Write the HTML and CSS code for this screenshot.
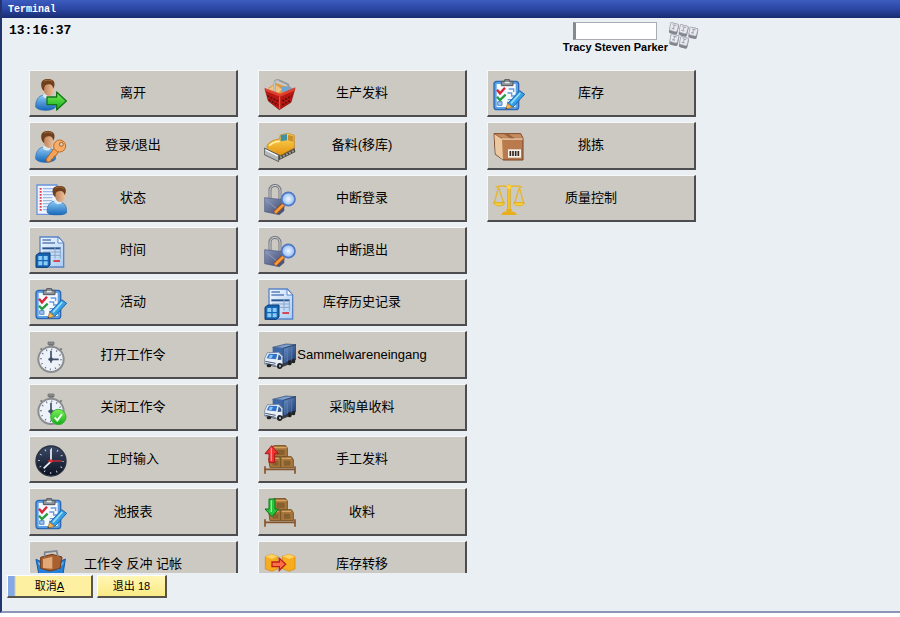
FILE: index.html
```
<!DOCTYPE html>
<html lang="zh-CN">
<head>
    <meta charset="UTF-8">
    <meta name="viewport" content="width=device-width, initial-scale=1.0">
    <title>Terminal</title>
    <link rel="stylesheet" href="styles.css">
</head>
<body>
    <!-- Shared icons -->
    <svg class="sprite" aria-hidden="true">
        <defs>
            <linearGradient id="blue" x1="0" y1="0" x2="0" y2="1"><stop offset="0" stop-color="#8cc8f5"/><stop offset="1" stop-color="#1465b8"/></linearGradient>
            <linearGradient id="skin" x1="0" y1="0" x2="1" y2="0"><stop offset="0" stop-color="#b87a50"/><stop offset="1" stop-color="#eec29c"/></linearGradient>
            <linearGradient id="green" x1="0" y1="0" x2="0" y2="1"><stop offset="0" stop-color="#7df05a"/><stop offset="1" stop-color="#12ac18"/></linearGradient>
            <linearGradient id="paper" x1="0" y1="0" x2="1" y2="1"><stop offset="0" stop-color="#f2f8ff"/><stop offset="1" stop-color="#a9cdf4"/></linearGradient>
            <linearGradient id="night" x1="0" y1="0" x2="0" y2="1"><stop offset="0" stop-color="#3c4a66"/><stop offset="1" stop-color="#0b1222"/></linearGradient>
            <linearGradient id="gold" x1="0" y1="0" x2="0" y2="1"><stop offset="0" stop-color="#ffd95c"/><stop offset="1" stop-color="#e39410"/></linearGradient>
            <linearGradient id="steel" x1="0" y1="0" x2="1" y2="1"><stop offset="0" stop-color="#8d99bd"/><stop offset="1" stop-color="#3c466c"/></linearGradient>
            <linearGradient id="tarp" x1="0" y1="0" x2="1" y2="1"><stop offset="0" stop-color="#6b93c8"/><stop offset="1" stop-color="#1b3468"/></linearGradient>
            <radialGradient id="lens"><stop offset="0" stop-color="#f0f7ff"/><stop offset="1" stop-color="#8fbaf2"/></radialGradient>
        </defs>

        <symbol id="person" viewBox="0 0 96 96">
            <path d="M2 84c-1-20 9-34 22-35l18 3c14 2 19 14 20 32-8 13-52 14-60 0z" fill="url(#blue)" stroke="#2b6cae" stroke-width="2"/>
            <path d="M23 50c5 9 16 12 24 3l-3-7H26z" fill="#dce9f3"/>
            <path d="M23 16c0-10 33-12 34 4 1 18-5 31-15 31-11 0-18-14-19-35z" fill="url(#skin)"/>
            <path d="M19 22C16 4 27 0 39 0c14 0 22 6 19 22l-4 8c0-9-4-14-12-14-7 0-12 2-14 8l-1 12c-5-3-7-8-8-14z" fill="#70401e"/>
            <path d="M27 7c7-5 18-5 25 1" fill="none" stroke="#a06c3c" stroke-width="3"/>
        </symbol>

        <symbol id="leave" viewBox="0 0 96 96">
            <use href="#person"/>
            <path d="M36 54h29V39l29 27-29 27V77H36z" fill="url(#green)" stroke="#14741a" stroke-width="4" stroke-linejoin="round"/>
        </symbol>

        <symbol id="login" viewBox="0 0 96 96">
            <use href="#person"/>
            <path d="M60 48L34 84l2 9 10-1 4-8 5-1 2-7 6-2 8-13z" fill="#f3a35a" stroke="#b8621c" stroke-width="3" stroke-linejoin="round"/>
            <circle cx="74" cy="45" r="18" fill="#f5ad67" stroke="#c26d26" stroke-width="3"/>
            <circle cx="79" cy="40" r="6" fill="#ccc9c2" stroke="#b8621c" stroke-width="3"/>
        </symbol>

        <symbol id="status" viewBox="0 0 96 96">
            <path d="M6 3h60v88H6z" fill="#eef4ff" stroke="#6b93dc" stroke-width="4"/>
            <path d="M24 14h34M24 23h34M24 32h34M24 41h28M24 50h28M24 59h22M24 68h20M24 77h20" stroke="#9ab8e8" stroke-width="4"/>
            <path d="M17 12v70" stroke="#d9444e" stroke-width="6" stroke-dasharray="5 4"/>
            <svg x="34" y="6" width="62" height="88" viewBox="0 0 62 94" preserveAspectRatio="none"><use href="#person" width="96" height="96"/></svg>
        </symbol>

        <symbol id="time" viewBox="0 0 96 96">
            <path d="M15 3h55l16 18v72H15z" fill="url(#paper)" stroke="#5a84c8" stroke-width="4"/>
            <path d="M69 3v18h17z" fill="#fff" stroke="#5a84c8" stroke-width="3"/>
            <path d="M22 12h26M22 21h38" stroke="#5a7fb8" stroke-width="4"/>
            <path d="M22 37h56" stroke="#2c568e" stroke-width="6"/>
            <path d="M24 48h52M24 58h52M60 34v34M76 34v34" stroke="#8ba4c8" stroke-width="3"/>
            <path d="M55 75h20" stroke="#d82c34" stroke-width="5"/>
            <path d="M3 58l9-7h33v36l-8 7H3z" fill="#1764b4" stroke="#0b3a72" stroke-width="3"/>
            <path d="M10 60h12v12H10zM26 60h12v12H26zM10 76h12v12H10zM26 76h12v12H26z" fill="#8accf8"/>
        </symbol>

        <symbol id="activity" viewBox="0 0 96 96">
            <rect x="3" y="7" width="74" height="85" rx="9" fill="#5b9fe4" stroke="#2b67b5" stroke-width="4"/>
            <path d="M11 15h57v69H11z" fill="#f4f9ff"/>
            <path d="M25 20V7h10V2h15v5h10v13z" fill="#8d9297" stroke="#50565c" stroke-width="3"/>
            <path d="M35 11h15" stroke="#e1e5e8" stroke-width="4"/>
            <path d="M47 30h15v9M43 42h13v9h10M44 62h14v8H42" fill="none" stroke="#6a9ad8" stroke-width="4"/>
            <path d="M14 68h13v11H14z" fill="#9bc4ee" stroke="#5a8ac8" stroke-width="3"/>
            <path d="M12 32l9 11 15-17" fill="none" stroke="#d92536" stroke-width="7"/>
            <path d="M12 53l9 10 17-16" fill="none" stroke="#259c3e" stroke-width="7"/>
            <path d="M80 35l15 11-36 39-15-11z" fill="#35a0e4" stroke="#1868ac" stroke-width="3"/>
            <path d="M82 42L54 73" stroke="#9bddfc" stroke-width="5"/>
            <path d="M44 73l15 12-21 6z" fill="#f0b75c" stroke="#94642c" stroke-width="2"/>
            <path d="M39 86l-1 5 6-1z" fill="#333"/>
        </symbol>

        <symbol id="stopwatch" viewBox="0 0 96 96">
            <path d="M39 3h18v8H39zM44 10h9v10h-9z" fill="#8e8f91" stroke="#66686b" stroke-width="2"/>
            <path d="M17 22l9 9M80 22l-9 9" stroke="#77797c" stroke-width="6"/>
            <circle cx="48" cy="55" r="38" fill="#edf1f8" stroke="#8b8d90" stroke-width="6"/>
            <circle cx="48" cy="55" r="30" fill="none" stroke="#626d80" stroke-width="5" stroke-dasharray="3 12.7"/>
            <path d="M48 29v36M40 55h31" stroke="#3f4f68" stroke-width="5"/>
            <circle cx="48" cy="55" r="6" fill="#3f4f68"/>
        </symbol>

        <symbol id="stopwatch-ok" viewBox="0 0 96 96">
            <use href="#stopwatch"/>
            <circle cx="70" cy="72" r="23" fill="url(#green)" stroke="#3fae3d" stroke-width="3"/>
            <path d="M59 73l8 9 14-19" fill="none" stroke="#effff0" stroke-width="6"/>
        </symbol>

        <symbol id="clock" viewBox="0 0 96 96">
            <circle cx="48" cy="48" r="45" fill="url(#night)" stroke="#28303e" stroke-width="4"/>
            <circle cx="48" cy="48" r="36" fill="none" stroke="#c6cedc" stroke-width="6" stroke-dasharray="3 15.85" stroke-dashoffset="1"/>
            <path d="M48 13v36L26 70" fill="none" stroke="#f2f5fa" stroke-width="5"/>
            <path d="M38 48h43" stroke="#d3272d" stroke-width="4"/>
            <circle cx="48" cy="48" r="5" fill="#e03434"/>
        </symbol>

        <symbol id="posting" viewBox="0 0 96 96">
            <path d="M3 28l16 7h54l18-8-9 59c-20 9-48 9-68 0z" fill="#2680d8" stroke="#1558a4" stroke-width="3"/>
            <path d="M10 38l14 17 8-14 14 20 10-18 12 14 17-20" fill="none" stroke="#79c2f8" stroke-width="4"/>
            <path d="M17 22l34-9 30 8-6 34-30 8-28-8z" fill="#a9602f" stroke="#713817" stroke-width="3"/>
            <path d="M24 27l28-7v36l-28-2z" fill="#e2a878"/>
            <path d="M29 20V7l36-4 4 18" fill="none" stroke="#7d8590" stroke-width="5"/>
        </symbol>

        <symbol id="basket" viewBox="0 0 96 96">
            <path d="M12 27l24-15 23 8 27 9-32 22z" fill="#d99a4c"/>
            <path d="M15 30l17-14 22 15-10 10z" fill="#f0c482"/>
            <path d="M50 25l25-4 12 8-28 16z" fill="#69a8d6"/>
            <path d="M3 30l45 18 45-20-12 42-35 22-33-26z" fill="#b91812" stroke="#7c100c" stroke-width="2"/>
            <path d="M1 26l47 18 46-19-3 10-43 18L5 36z" fill="#e2402e"/>
            <path d="M47 53v37" stroke="#e8694e" stroke-width="3"/>
            <path d="M11 50l31 17M15 62l27 17M55 66l28-15M55 78l23-13" stroke="#5a0d0b" stroke-width="5" stroke-dasharray="6 4"/>
            <path d="M32 38V9c1-5 8-7 14-5l26 12 4 16" fill="none" stroke="#949ca2" stroke-width="6" stroke-linejoin="round"/>
            <path d="M32 36V9c2-4 7-4 12-3" fill="none" stroke="#e0e5e7" stroke-width="2"/>
        </symbol>

        <symbol id="dozer" viewBox="0 0 96 96">
            <path d="M12 60l34 27 48-24-3-14-70-2z" fill="#42443f"/>
            <path d="M48 80l42-21" stroke="#97978c" stroke-width="7" stroke-dasharray="6 4"/>
            <path d="M9 43c8-10 20-18 38-19l2-12 22-5 20 6v38L50 73 10 58z" fill="url(#gold)" stroke="#bb7a13" stroke-width="2"/>
            <path d="M50 13l19-4v19l-19 3z" fill="#4291a0"/>
            <path d="M72 12l16 3v17l-16-4z" fill="#c98f28"/>
            <path d="M16 44c9-9 20-13 31-13" fill="none" stroke="#fff0a0" stroke-width="5"/>
            <path d="M1 51l43 21v20L1 71z" fill="#b4b8b9" stroke="#5d6264" stroke-width="3"/>
            <path d="M5 57l36 18" stroke="#fff" stroke-width="4"/>
        </symbol>

        <symbol id="lock" viewBox="0 0 96 96">
            <path d="M18 45V19c0-19 29-20 30 0v26" fill="none" stroke="#73777e" stroke-width="9"/>
            <path d="M18 45V19c0-19 29-20 30 0v26" fill="none" stroke="#d4d6d9" stroke-width="3"/>
            <path d="M2 41l44 5 14-4v38L46 92 2 83z" fill="url(#steel)" stroke="#4b577e" stroke-width="2"/>
            <path d="M5 48l39 31" stroke="#8f9bc0" stroke-width="3"/>
            <path d="M58 62L33 86" stroke="#994b13" stroke-width="13"/>
            <path d="M58 62L33 86" stroke="#f99b3b" stroke-width="8"/>
            <circle cx="73" cy="45" r="20" fill="url(#lens)" stroke="#4e78c6" stroke-width="5"/>
        </symbol>

        <symbol id="truck" viewBox="0 0 96 96">
            <path d="M18 74l32 6 43-17v-8H20z" fill="#3a3d42"/>
            <path d="M26 19L66 9l29 2-37 11z" fill="#7d9fce" stroke="#29466f" stroke-width="2"/>
            <path d="M26 19l32 3v46l-32-8z" fill="#3d68a6"/>
            <path d="M58 22l37-11v45L58 69z" fill="url(#tarp)" stroke="#1a2f58" stroke-width="2"/>
            <path d="M70 22v38M83 18v37" stroke="#5f86bd" stroke-width="2"/>
            <path d="M2 53l8-18 34-1 12 12v22l-12 10-42-9z" fill="#e8eef6" stroke="#5f728c" stroke-width="2"/>
            <path d="M8 52l7-14 25 1-4 16z" fill="#2f73cc"/>
            <path d="M14 50l4-9 9 1-4 9z" fill="#8ec3f4"/>
            <path d="M44 40l8 8v8l-11 1z" fill="#345a90"/>
            <path d="M4 61l31 6M4 67l31 6" stroke="#4a5c76" stroke-width="3"/>
            <ellipse cx="47" cy="75" rx="8" ry="9" fill="#1f2125"/>
            <ellipse cx="48" cy="75" rx="3" ry="4" fill="#b9bdc4"/>
            <ellipse cx="15" cy="74" rx="7" ry="5" fill="#1f2125"/>
            <ellipse cx="77" cy="65" rx="6" ry="8" fill="#1f2125"/>
            <ellipse cx="89" cy="60" rx="5" ry="7" fill="#1f2125"/>
        </symbol>

        <symbol id="pallet" viewBox="0 0 96 96">
            <path d="M24 6l8-5h32l6 8v26H24zM14 40l9-5h26v33H18zM50 40l7-5h25l6 9v24H50z" fill="#a8763b" stroke="#7a5526" stroke-width="3"/>
            <path d="M38 14h24v16H38zM26 47h17v15H26zM60 47h19v15H60z" fill="#86602f"/>
            <path d="M26 8h42M20 40h24M53 40h28" stroke="#d2a565" stroke-width="4"/>
            <path d="M3 64v22M93 64v22M2 73h92" fill="none" stroke="#85542c" stroke-width="5"/>
        </symbol>

        <symbol id="issue" viewBox="0 0 96 96">
            <use href="#pallet"/>
            <path d="M23 2l20 24H32v27H15V26H3z" fill="#f03232" stroke="#a81718" stroke-width="3" stroke-linejoin="round"/>
            <path d="M22 8v40" stroke="#ff8e88" stroke-width="4"/>
        </symbol>

        <symbol id="receive" viewBox="0 0 96 96">
            <use href="#pallet"/>
            <path d="M24 56L3 33h12V3h18v30h11z" fill="#27c43a" stroke="#107020" stroke-width="3" stroke-linejoin="round"/>
            <path d="M22 7v35" stroke="#8bf286" stroke-width="4"/>
        </symbol>

        <symbol id="transfer" viewBox="0 0 96 96">
            <path d="M4 20l18-7 20 6v37l-18 8-20-7zM55 19l20-6 18 7v37l-18 7-20-8z" fill="#f7ab1e" stroke="#d4840c" stroke-width="2"/>
            <path d="M4 20l18-7 20 6-18 8zM55 19l20-6 18 7-18 7z" fill="#ffd45e"/>
            <path d="M24 36h22V25l19 18-19 18V50H24z" fill="#ff7048" stroke="#bd2119" stroke-width="4"/>
        </symbol>

        <symbol id="carton" viewBox="0 0 96 96">
            <path d="M3 8h80l7 14v65H31L7 70z" fill="#b97b4e" stroke="#764225" stroke-width="3" stroke-linejoin="round"/>
            <path d="M3 8h80l7 14H27z" fill="#c58c60" stroke="#895230" stroke-width="2"/>
            <path d="M4 10l23 14 3 62L8 69z" fill="#ecc8a0"/>
            <path d="M27 24h62" stroke="#f2d6b6" stroke-width="4"/>
            <path d="M32 8l19 14h14L46 8z" fill="#9d6238"/>
            <path d="M45 55h39v25H45z" fill="#f6f2ed"/>
            <path d="M52 60v15M60 60v15M68 60v15M76 60v15" stroke="#35241c" stroke-width="5"/>
        </symbol>

        <symbol id="scales" viewBox="0 0 96 96">
            <path d="M8 10q18-8 40 0 22-8 40 0M16 11L4 57h28L17 11M79 11L65 57h27L79 11" fill="none" stroke="#e3b62c" stroke-width="4"/>
            <path d="M44 3h8v78h-8z" fill="#f5c927" stroke="#d69f15" stroke-width="2"/>
            <path d="M2 56h33c-2 13-30 13-33 0zM62 56h32c-2 13-30 13-32 0z" fill="#f7cf39" stroke="#dba616" stroke-width="2"/>
            <path d="M31 83h34l7 10H24zM40 75h16v8H40z" fill="#e7af1e"/>
            <circle cx="48" cy="9" r="7" fill="#ffd744"/>
        </symbol>

        <!-- Key cap with its face and its lower side -->
        <symbol id="keycap" viewBox="0 0 32 40">
            <path d="M8 1l20 5q4 2 3 6l-5 22q-1 5-6 4L4 34q-4-1-3-6L5 5q1-4 3-4z" fill="#82848e"/>
            <path d="M9 2l18 5q3 1 2 5l-4 15q-1 3-5 2L5 25q-3-1-2-5L6 4q1-3 3-2z" fill="#e9ebf1" stroke="#a5a7b2" stroke-width="2"/>
            <path d="M12 8l11 3M17 10l-3 10M9 19l9 2" stroke="#7f828e" stroke-width="2"/>
        </symbol>
    </svg>

    <div class="window">
        <header class="title-bar">
            <h1>Terminal</h1>
        </header>

        <div class="top-bar">
            <time class="clock">13:16:37</time>
            <div class="user">
                <div class="user-field">
                    <input type="text" id="badge" class="badge">
                    <label for="badge">Tracy Steven Parker</label>
                </div>
                <button class="keyboard" aria-label="键盘">
                    <svg viewBox="0 0 96 84">
                        <use href="#keycap" x="2" y="0" width="32" height="40"/>
                        <use href="#keycap" x="31" y="6" width="32" height="40"/>
                        <use href="#keycap" x="60" y="13" width="32" height="40"/>
                        <use href="#keycap" x="3" y="34" width="32" height="40"/>
                        <use href="#keycap" x="32" y="42" width="32" height="40"/>
                    </svg>
                </button>
            </div>
        </div>

        <main class="menu">
            <div class="menu-grid">
                <button class="tile"><svg class="icon"><use href="#leave"/></svg><span>离开</span></button>
                <button class="tile"><svg class="icon"><use href="#login"/></svg><span>登录/退出</span></button>
                <button class="tile"><svg class="icon"><use href="#status"/></svg><span>状态</span></button>
                <button class="tile"><svg class="icon"><use href="#time"/></svg><span>时间</span></button>
                <button class="tile"><svg class="icon"><use href="#activity"/></svg><span>活动</span></button>
                <button class="tile"><svg class="icon"><use href="#stopwatch"/></svg><span>打开工作令</span></button>
                <button class="tile"><svg class="icon"><use href="#stopwatch-ok"/></svg><span>关闭工作令</span></button>
                <button class="tile"><svg class="icon"><use href="#clock"/></svg><span>工时输入</span></button>
                <button class="tile"><svg class="icon"><use href="#activity"/></svg><span>池报表</span></button>
                <button class="tile"><svg class="icon"><use href="#posting"/></svg><span>工作令 反冲 记帐</span></button>

                <button class="tile"><svg class="icon"><use href="#basket"/></svg><span>生产发料</span></button>
                <button class="tile"><svg class="icon"><use href="#dozer"/></svg><span>备料(移库)</span></button>
                <button class="tile"><svg class="icon"><use href="#lock"/></svg><span>中断登录</span></button>
                <button class="tile"><svg class="icon"><use href="#lock"/></svg><span>中断退出</span></button>
                <button class="tile"><svg class="icon"><use href="#time"/></svg><span>库存历史记录</span></button>
                <button class="tile"><svg class="icon"><use href="#truck"/></svg><span>Sammelwareneingang</span></button>
                <button class="tile"><svg class="icon"><use href="#truck"/></svg><span>采购单收料</span></button>
                <button class="tile"><svg class="icon"><use href="#issue"/></svg><span>手工发料</span></button>
                <button class="tile"><svg class="icon"><use href="#receive"/></svg><span>收料</span></button>
                <button class="tile"><svg class="icon"><use href="#transfer"/></svg><span>库存转移</span></button>

                <button class="tile"><svg class="icon"><use href="#activity"/></svg><span>库存</span></button>
                <button class="tile"><svg class="icon"><use href="#carton"/></svg><span>挑拣</span></button>
                <button class="tile"><svg class="icon"><use href="#scales"/></svg><span>质量控制</span></button>
            </div>
        </main>

        <footer class="actions">
            <button class="btn cancel">取消<u>A</u></button>
            <button class="btn">退出 18</button>
        </footer>
    </div>
</body>
</html>
```

FILE: styles.css
```
* {
    margin: 0;
    padding: 0;
    box-sizing: border-box;
}

body {
    background-color: #fff;
    color: #000;
    font-family: "Liberation Sans", "Noto Sans CJK SC", sans-serif;
    font-size: 13px;
    height: 100vh;
    padding-bottom: 4px;
}

button,
input {
    font: inherit;
    color: inherit;
}

.sprite {
    position: absolute;
    width: 0;
    height: 0;
}

.window {
    display: flex;
    flex-direction: column;
    height: 100%;
    background: #eaeff4;
    border-left: 2px solid #22356f;
    border-bottom: 2px solid #8b96b8;
}

.title-bar {
    height: 18px;
    padding-left: 6px;
    background: linear-gradient(#3c5cc0, #2c47a4 50%, #182c70);
    flex-shrink: 0;
}

.title-bar h1 {
    font-family: "Liberation Mono", monospace;
    font-size: 10px;
    line-height: 20px;
    color: #fff;
}

.top-bar {
    display: flex;
    justify-content: space-between;
    width: 100%;
    max-width: 698px;
    height: 52px;
    padding: 4px 0 0 7px;
    flex-shrink: 0;
}

.clock {
    font-family: "Liberation Mono", monospace;
    font-size: 13px;
    line-height: 18px;
    font-weight: bold;
}

.user {
    display: flex;
    align-items: flex-start;
}

.user-field {
    display: flex;
    flex-direction: column;
    align-items: center;
}

.user-field label {
    font-size: 11px;
    font-weight: bold;
    line-height: 15px;
}

.badge {
    width: 84px;
    height: 18px;
    background: #fff;
    border: 1px solid #a9adb2;
    border-left: 3px solid #85888c;
}

.keyboard {
    width: 32px;
    height: 28px;
    border: none;
    background: none;
}

.keyboard svg {
    display: block;
    width: 32px;
    height: 28px;
}

.menu {
    flex: 1;
    min-height: 0;
    overflow: hidden;
    padding-left: 27px;
}

/* Columns fill from top to bottom, ten entries each */
.menu-grid {
    display: grid;
    grid-template-columns: repeat(3, 209px);
    grid-template-rows: repeat(10, 1fr);
    grid-auto-flow: column;
    column-gap: 20px;
    row-gap: 5px;
    min-height: 518px;
}

/* Icon and label share one cell so the label stays centred */
.tile {
    display: grid;
    grid-template-columns: 1fr;
    align-items: center;
    background: #ccc9c2;
    border: 1px solid #f7f8f8;
    border-right: 2px solid #4d4d50;
    border-bottom: 2px solid #4d4d50;
    cursor: pointer;
}

.tile > * {
    grid-area: 1 / 1;
}

.tile span {
    line-height: 18px;
    text-align: center;
}

.icon {
    width: 32px;
    height: 32px;
    margin: 4px 0 0 5px;
}

.actions {
    display: flex;
    gap: 4px;
    height: 38px;
    padding: 2px 0 0 5px;
    flex-shrink: 0;
}

.btn {
    min-width: 70px;
    height: 23px;
    background: linear-gradient(#fff6b4, #fbea86);
    border: 1px solid #fff;
    border-right: 2px solid #55534a;
    border-bottom: 2px solid #55534a;
    font-size: 11px;
    line-height: 18px;
    cursor: pointer;
}

.btn.cancel {
    min-width: 86px;
    background: linear-gradient(90deg, #85a8e4 6px, #fdf0a0 8px);
}
```
